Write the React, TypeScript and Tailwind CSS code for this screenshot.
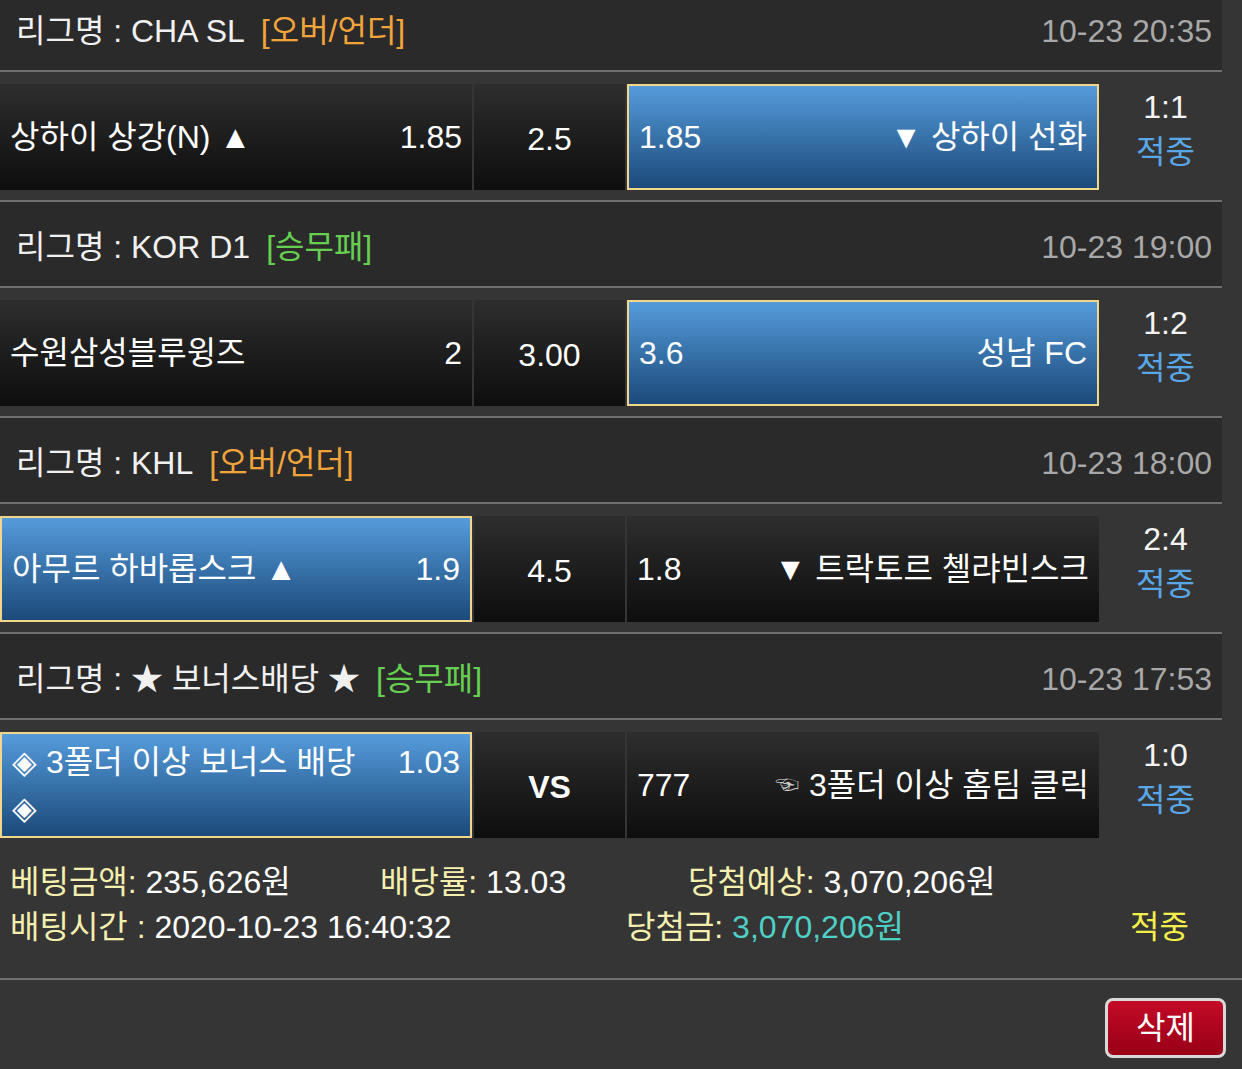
import React from "react"

type Kind = "ou" | "wdl"
type Match = {
  league: string
  kind: Kind
  time: string
  home: string
  homeOdds: string
  mid: string
  midBold?: boolean
  awayOdds: string
  away: React.ReactNode
  pick: "home" | "away"
  score: string
}

const matches: Match[] = [
  {
    league: "CHA SL",
    kind: "ou",
    time: "10-23 20:35",
    home: "상하이 상강(N) ▲",
    homeOdds: "1.85",
    mid: "2.5",
    awayOdds: "1.85",
    away: "▼ 상하이 선화",
    pick: "away",
    score: "1:1",
  },
  {
    league: "KOR D1",
    kind: "wdl",
    time: "10-23 19:00",
    home: "수원삼성블루윙즈",
    homeOdds: "2",
    mid: "3.00",
    awayOdds: "3.6",
    away: "성남 FC",
    pick: "away",
    score: "1:2",
  },
  {
    league: "KHL",
    kind: "ou",
    time: "10-23 18:00",
    home: "아무르 하바롭스크 ▲",
    homeOdds: "1.9",
    mid: "4.5",
    awayOdds: "1.8",
    away: "▼ 트락토르 첼랴빈스크",
    pick: "home",
    score: "2:4",
  },
  {
    league: "★ 보너스배당 ★",
    kind: "wdl",
    time: "10-23 17:53",
    home: "◈ 3폴더 이상 보너스 배당\n◈",
    homeOdds: "1.03",
    mid: "VS",
    midBold: true,
    awayOdds: "777",
    away: (
      <>
        <span className="mr-[10px] text-[24px] text-[#cfcfcf]">☜</span>3폴더 이상 홈팀 클릭
      </>
    ),
    pick: "home",
    score: "1:0",
  },
]

function Cell({ active, className = "", children }: { active: boolean; className?: string; children: React.ReactNode }) {
  return (
    <div
      className={`flex items-center ${
        active
          ? "border-2 border-[#f2d68c] bg-linear-to-b from-[#559cdc] to-[#1c4a7a] px-[10px]"
          : "bg-linear-to-b from-[#2e2e2e] to-[#0e0e0e] px-[10px]"
      } ${className}`}
    >
      {children}
    </div>
  )
}

function MatchBlock({ m }: { m: Match }) {
  return (
    <div className="w-[1222px]">
      <div className="h-[2px] bg-[#707070]" />
      {/* league header */}
      <div className="flex h-[84px] items-center justify-between bg-[#2a2a2a] pl-[16px] pr-[10px] pt-[6px]">
        <div className="flex items-center">
          <span className="text-[#f0f0f0]">리그명 : {m.league}</span>
          <span className={`ml-[16px] ${m.kind === "ou" ? "text-[#f2a43c]" : "text-[#66cf52]"}`}>
            {m.kind === "ou" ? "[오버/언더]" : "[승무패]"}
          </span>
        </div>
        <span className="text-[#a8a8a8]">{m.time}</span>
      </div>
      <div className="h-[2px] bg-[#707070]" />

      {/* match row */}
      <div className="flex h-[128px] pb-[10px] pt-[12px]">
        <Cell active={m.pick === "home"} className="w-[472px]">
          <div className="flex w-full items-start leading-[46px]">
            <span className="flex-1 whitespace-pre-line">{m.home}</span>
            <span className="ml-[8px]">{m.homeOdds}</span>
          </div>
        </Cell>
        <div className="ml-[2px] flex w-[151px] items-center justify-center bg-linear-to-b from-[#2e2e2e] to-[#0e0e0e] pt-[4px]">
          <span className={m.midBold ? "font-bold" : ""}>{m.mid}</span>
        </div>
        <Cell active={m.pick === "away"} className="ml-[2px] w-[472px]">
          <div className="flex w-full items-center justify-between leading-[46px]">
            <span>{m.awayOdds}</span>
            <span className="flex items-center">{m.away}</span>
          </div>
        </Cell>
        <div className="flex flex-1 flex-col items-center justify-center pb-[14px] pl-[10px] leading-[45px]">
          <span className="text-[#f4f4f4]">{m.score}</span>
          <span className="text-[#5aa6e6]">적중</span>
        </div>
      </div>
    </div>
  )
}

export default function App() {
  return (
    <div className="min-h-screen overflow-hidden bg-[#353535] font-['Liberation_Sans','Noto_Sans_CJK_KR',sans-serif] text-[32px] leading-none text-white">
      <div className="-mt-[16px]">
        {matches.map((m) => (
          <MatchBlock key={m.league} m={m} />
        ))}
      </div>

      {/* summary */}
      <div className="h-[130px] pl-[10px] pt-[12px] leading-[45px]">
        <div className="grid grid-cols-[370px_308px_1fr]">
          <div>
            <span className="text-[#f4efae]">베팅금액:</span> 235,626원
          </div>
          <div>
            <span className="text-[#f4efae]">배당률:</span> 13.03
          </div>
          <div>
            <span className="text-[#f4efae]">당첨예상:</span> 3,070,206원
          </div>
        </div>
        <div className="grid grid-cols-[616px_504px_auto]">
          <div>
            <span className="text-[#f4efae]">배팅시간 :</span> 2020-10-23 16:40:32
          </div>
          <div>
            <span className="text-[#f4efae]">당첨금:</span> <span className="text-[#4fd0c6]">3,070,206원</span>
          </div>
          <div className="text-[#f3ee4c]">적중</div>
        </div>
      </div>
      <div className="h-[2px] bg-[#707070]" />

      <div className="flex justify-end pr-[16px] pt-[18px]">
        <button className="flex h-[60px] w-[121px] items-center justify-center rounded-[8px] border-[3px] border-[#d9d9d9] bg-linear-to-b from-[#c40b27] to-[#980017] text-[32px] text-white">
          삭제
        </button>
      </div>
    </div>
  )
}
